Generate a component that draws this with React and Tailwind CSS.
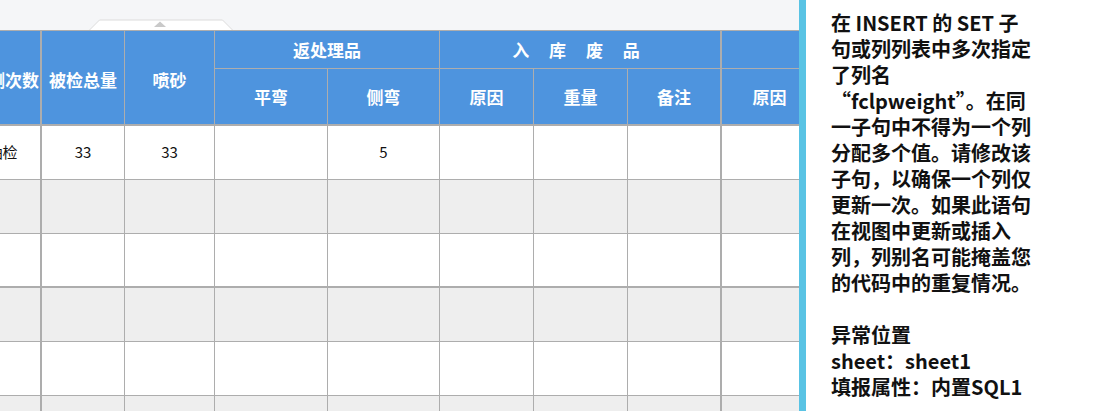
import React from "react";

const FONT = { fontFamily: '"Noto Sans CJK SC", "Noto Sans", sans-serif' };

const dataRows = [
  ["抽检", "33", "33", "", "5", "", "", "", ""],
  ["", "", "", "", "", "", "", "", ""],
  ["", "", "", "", "", "", "", "", ""],
  ["", "", "", "", "", "", "", "", ""],
  ["", "", "", "", "", "", "", "", ""],
  ["", "", "", "", "", "", "", "", ""],
];

// border class for each column (right edge)
const colBorder = [
  "border-r-2 pr-[5px]",
  "border-r",
  "border-r",
  "border-r",
  "border-r",
  "border-r",
  "border-r",
  "border-r-2",
  "border-r",
];

const messageLines = [
  "在 INSERT 的 SET 子",
  "句或列列表中多次指定",
  "了列名",
  "“fclpweight”。在同",
  "一子句中不得为一个列",
  "分配多个值。请修改该",
  "子句，以确保一个列仅",
  "更新一次。如果此语句",
  "在视图中更新或插入",
  "列，列别名可能掩盖您",
  "的代码中的重复情况。",
  "",
  "异常位置",
  "sheet：sheet1",
  "填报属性：内置SQL1",
];

function TopTab() {
  return (
    <svg width="144" height="11" viewBox="0 0 144 11">
      <path d="M0.5 11 L10.5 1 H133.5 L143.5 11" fill="#ffffff" stroke="#dcdcdc" strokeWidth="1" />
      <path d="M65 8 L71 2.5 L77 8 Z" fill="#c9c9c9" />
    </svg>
  );
}

export default function App() {
  const head = "bg-[#4e94de] text-white font-bold text-[17px] border-[#adadad] flex items-center justify-center";

  return (
    <div className="w-[1108px] h-[411px] flex overflow-hidden bg-white" style={FONT}>
      {/* left: report table */}
      <div className="w-[799px] flex flex-col overflow-hidden bg-[#f5f6f8]">
        <div className="h-[30px] shrink-0 flex items-end pl-[89px]">
          <TopTab />
        </div>
        <div className="ml-[-30px] w-[1000px] border-t border-[#adadad]">
          <div className="grid grid-cols-[72px_83px_90px_113px_112px_94px_94px_94px_96px_112px] grid-rows-[38px_57px]">
            <div className={`${head} row-span-2 border-r-2 border-b-2 pt-[5px]`}>检测次数</div>
            <div className={`${head} row-span-2 border-r border-b-2 pt-[5px]`}>被检总量</div>
            <div className={`${head} row-span-2 border-r border-b-2 pt-[5px]`}>喷砂</div>
            <div className={`${head} col-span-2 border-r border-b`}>返处理品</div>
            <div className={`${head} col-span-3 border-r-2 border-b`}>
              <span className="tracking-[8px]">入 库 废 品</span>
            </div>
            <div className={`${head} col-span-2 border-b`}></div>
            <div className={`${head} border-r border-b-2`}>平弯</div>
            <div className={`${head} border-r border-b-2`}>侧弯</div>
            <div className={`${head} border-r border-b-2`}>原因</div>
            <div className={`${head} border-r border-b-2`}>重量</div>
            <div className={`${head} border-r-2 border-b-2`}>备注</div>
            <div className={`${head} border-r border-b-2`}>原因</div>
            <div className={`${head} border-b-2`}></div>
          </div>
          {dataRows.map((row, i) => (
            <div
              key={i}
              className={`grid grid-cols-[72px_83px_90px_113px_112px_94px_94px_94px_96px_112px] h-[54px] ${
                i % 2 === 0 ? "bg-white" : "bg-[#eeeeee]"
              }`}
            >
              {row.map((cell, j) => (
                <div
                  key={j}
                  className={`${colBorder[j]} ${i === 2 ? "border-b-2" : "border-b"} border-[#adadad] flex items-center justify-center text-[15px] text-[#111]`}
                >
                  {cell}
                </div>
              ))}
              <div className="border-b border-[#adadad]"></div>
            </div>
          ))}
        </div>
      </div>

      {/* stripe */}
      <div className="w-[7px] shrink-0 bg-[#59c3e4]"></div>

      {/* right: error message */}
      <div className="flex-1 bg-white pl-[25px] pt-[10px] text-[20px] leading-[26px] font-bold text-[#111]">
        {messageLines.map((line, i) => (
          <div key={i} className="h-[26px] whitespace-nowrap">
            {line}
          </div>
        ))}
      </div>
    </div>
  );
}
